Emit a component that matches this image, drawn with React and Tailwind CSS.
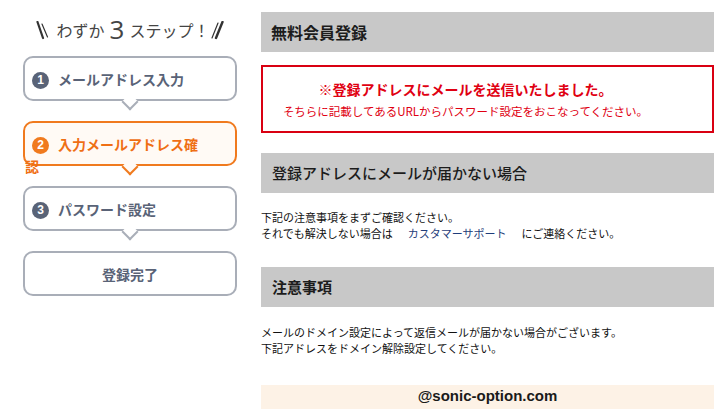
import React from "react";

const jp = "font-['Noto_Sans_CJK_JP',sans-serif]";

function Tail({ orange }) {
  return (
    <div
      className={`absolute left-1/2 -translate-x-1/2 bottom-[-9px] w-[12px] h-[12px] rotate-45 border-r-2 border-b-2 ${
        orange ? "border-[#f07a1e] bg-[#fffaf5]" : "border-[#a9aeb8] bg-white"
      }`}
    ></div>
  );
}

function Step({ num, label, active, tail, center }) {
  const color = active ? "text-[#ef6f14]" : "text-[#596377]";
  return (
    <div
      className={`relative h-[45px] rounded-[10px] border-2 pt-[10px] ${
        active ? "border-[#f07a1e] bg-[#fffaf5]" : "border-[#a9aeb8] bg-white"
      }`}
    >
      {tail && <Tail orange={active} />}
      {center ? (
        <div className={`text-center text-[14px] leading-[22px] font-bold ${color}`}>{label}</div>
      ) : (
        <div className={`relative z-10 w-[180px] text-[14px] leading-[22px] font-bold ${color}`}>
          <span
            className={`inline-flex w-[17px] h-[17px] ml-[7px] mr-[9px] items-center justify-center rounded-full text-white text-[12px] leading-none align-[1px] font-bold font-['Liberation_Sans',sans-serif] ${
              active ? "bg-[#f07a1e]" : "bg-[#596377]"
            }`}
          >
            {num}
          </span>
          {label}
        </div>
      )}
    </div>
  );
}

export default function App() {
  return (
    <div className={`w-[724px] h-[409px] overflow-hidden bg-white flex ${jp}`}>
      {/* steps */}
      <div className="w-[214px] ml-[23px] shrink-0">
        <div className="h-[56px] flex items-center justify-center gap-[3px] pt-[4px] text-[#444]">
          <svg width="14" height="19" viewBox="0 0 14 19" className="mr-[4px]">
            <line x1="1.5" y1="1" x2="7" y2="17" stroke="#333" strokeWidth="2.2" strokeLinecap="round" />
            <line x1="6" y1="3" x2="11.5" y2="16" stroke="#333" strokeWidth="1.2" strokeLinecap="round" />
          </svg>
          <span className="text-[16px] leading-none">わずか</span>
          <span className="text-[26px] leading-none font-normal mx-[2px] mt-[-3px] font-['Open_Sans',sans-serif]">3</span>
          <span className="text-[16px] leading-none">ステップ！</span>
          <svg width="14" height="19" viewBox="0 0 14 19" className="ml-[-2px]">
            <line x1="8" y1="2" x2="2" y2="17" stroke="#333" strokeWidth="1.2" strokeLinecap="round" />
            <line x1="12.5" y1="1" x2="6" y2="17" stroke="#333" strokeWidth="2.4" strokeLinecap="round" />
          </svg>
        </div>
        <div className="flex flex-col gap-[20px]">
          <Step num="1" label="メールアドレス入力" tail />
          <Step num="2" label="入力メールアドレス確認" active tail />
          <Step num="3" label="パスワード設定" tail />
          <Step label="登録完了" center />
        </div>
      </div>

      {/* main */}
      <div className="w-[453px] ml-[24px] shrink-0">
        <div className="mt-[12px] h-[40px] bg-[#c8c8c8] flex items-center pl-[10px]">
          <h2 className="text-[16px] font-bold text-[#1c1c1c]">無料会員登録</h2>
        </div>

        <div className="mt-[13px] h-[68px] border-2 border-[#d90012] pt-[12px] pr-[44px] text-center text-[#e00012]">
          <p className="text-[14px] leading-[20px] font-bold">※登録アドレスにメールを送信いたしました。</p>
          <p className="text-[11.5px] leading-[18px] mt-[3px]">
            そちらに記載してあるURLからパスワード設定をおこなってください。
          </p>
        </div>

        <div className="mt-[20px] h-[40px] bg-[#c8c8c8] flex items-center pl-[11px]">
          <h2 className="text-[15px] font-medium text-[#1c1c1c]">登録アドレスにメールが届かない場合</h2>
        </div>

        <div className="mt-[16px] text-[11px] leading-[16px] text-[#111]">
          <p>下記の注意事項をまずご確認ください。</p>
          <p>
            それでも解決しない場合は
            <span className="mx-[15px] text-[#1f3d7a]">カスタマーサポート</span>
            にご連絡ください。
          </p>
        </div>

        <div className="mt-[26px] h-[40px] bg-[#c8c8c8] flex items-center pl-[11px]">
          <h2 className="text-[15px] font-bold text-[#1c1c1c]">注意事項</h2>
        </div>

        <div className="mt-[17px] text-[11px] leading-[16px] text-[#111]">
          <p>メールのドメイン設定によって返信メールが届かない場合がございます。</p>
          <p>下記アドレスをドメイン解除設定してください。</p>
        </div>

        <div className="mt-[29px] h-[32px] bg-[#fdf2e6] text-center pt-[1px] text-[15px] leading-[18px]">
          <span className="font-['Liberation_Sans',sans-serif] font-bold text-[#1a1a1a]">
            @sonic-option.com
          </span>
        </div>
      </div>
    </div>
  );
}
